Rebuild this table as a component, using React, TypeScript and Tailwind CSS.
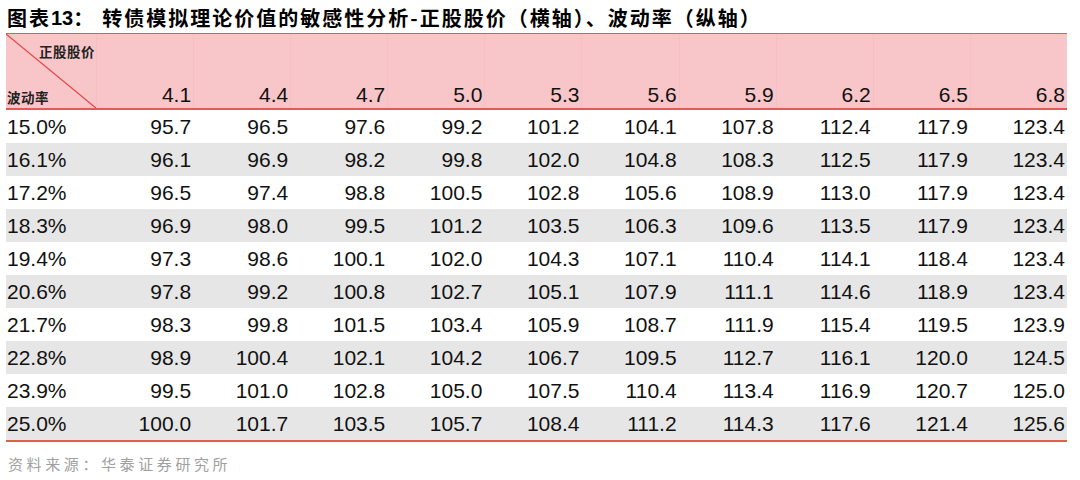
import React from "react";

const cols = ["4.1", "4.4", "4.7", "5.0", "5.3", "5.6", "5.9", "6.2", "6.5", "6.8"];
const rows: [string, string[]][] = [
  ["15.0%", ["95.7", "96.5", "97.6", "99.2", "101.2", "104.1", "107.8", "112.4", "117.9", "123.4"]],
  ["16.1%", ["96.1", "96.9", "98.2", "99.8", "102.0", "104.8", "108.3", "112.5", "117.9", "123.4"]],
  ["17.2%", ["96.5", "97.4", "98.8", "100.5", "102.8", "105.6", "108.9", "113.0", "117.9", "123.4"]],
  ["18.3%", ["96.9", "98.0", "99.5", "101.2", "103.5", "106.3", "109.6", "113.5", "117.9", "123.4"]],
  ["19.4%", ["97.3", "98.6", "100.1", "102.0", "104.3", "107.1", "110.4", "114.1", "118.4", "123.4"]],
  ["20.6%", ["97.8", "99.2", "100.8", "102.7", "105.1", "107.9", "111.1", "114.6", "118.9", "123.4"]],
  ["21.7%", ["98.3", "99.8", "101.5", "103.4", "105.9", "108.7", "111.9", "115.4", "119.5", "123.9"]],
  ["22.8%", ["98.9", "100.4", "102.1", "104.2", "106.7", "109.5", "112.7", "116.1", "120.0", "124.5"]],
  ["23.9%", ["99.5", "101.0", "102.8", "105.0", "107.5", "110.4", "113.4", "116.9", "120.7", "125.0"]],
  ["25.0%", ["100.0", "101.7", "103.5", "105.7", "108.4", "111.2", "114.3", "117.6", "121.4", "125.6"]],
];

const sans = { fontFamily: '"Liberation Sans", Arial, "Noto Sans CJK SC", sans-serif' };
const cjk = { fontFamily: '"Noto Sans CJK SC", "Liberation Sans", sans-serif' };

export default function App() {
  return (
    <div className="w-[1080px] h-[480px] bg-white overflow-hidden text-[#111]" style={sans}>
      <div className="pl-[7px] pt-[2px] h-[33px] flex items-center text-[20px] font-bold leading-none text-black" style={cjk}>
        <span className="tracking-[2px]">图表</span>
        <span style={sans} className="text-[20px]">13</span>
        <span className="mr-[9px]">：</span>
        <span className="tracking-[2px]">转债模拟理论价值的敏感性分析-正股股价（横轴）、波动率（纵轴）</span>
      </div>
      <div className="ml-[6px] w-[1061px]">
        <div className="grid grid-cols-[90px_repeat(10,1fr)] h-[77px] bg-[#f8c6c9] border-t-[1.5px] border-b-[2px] border-[#e25a5a]">
          <div className="relative">
            <svg className="absolute inset-0" width="90" height="74" viewBox="0 0 90 74" preserveAspectRatio="none">
              <line x1="0" y1="0" x2="90" y2="74" stroke="#e04848" strokeWidth="1.3" />
            </svg>
            <div className="absolute left-[33px] top-[11px] text-[13.5px] font-bold text-[#222] leading-none tracking-[0.5px]" style={cjk}>正股股价</div>
            <div className="absolute left-[1px] top-[57px] text-[13.5px] font-bold text-[#222] leading-none tracking-[0.5px]" style={cjk}>波动率</div>
          </div>
          {cols.map((c) => (
            <div key={c} className="flex items-end justify-end pr-[2px] pb-[1px] text-[21px] leading-[24px] border-l border-[#f6c0c3]">
              {c}
            </div>
          ))}
        </div>
        {rows.map(([label, vals], i) => (
          <div
            key={label}
            className={`grid grid-cols-[90px_repeat(10,1fr)] h-[33px] items-center text-[21px] ${i % 2 === 1 ? "bg-[#e6e6e6]" : "bg-white"}`}
          >
            <div className="pl-[1px]">{label}</div>
            {vals.map((v, j) => (
              <div key={j} className="text-right pr-[2px]">{v}</div>
            ))}
          </div>
        ))}
        <div className="h-[2px] bg-[#e0604f]" />
      </div>
      <div className="pl-[8px] mt-[14px] text-[15px] text-[#a0a0a0] tracking-[3.6px] leading-none" style={cjk}>
        资料来源：华泰证券研究所
      </div>
    </div>
  );
}
